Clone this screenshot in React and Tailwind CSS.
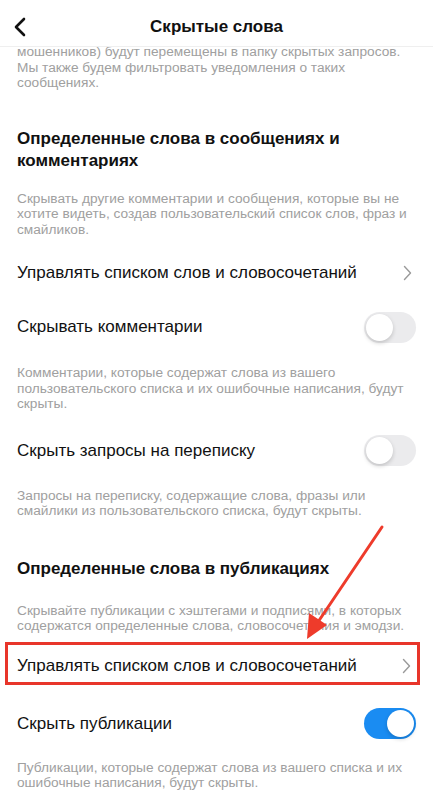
import React from 'react';

const Chevron = () => (
  <svg width="9" height="16" viewBox="0 0 9 16" fill="none" className="shrink-0">
    <polyline points="1.5,1.5 7.5,8 1.5,14.5" stroke="#9a9a9a" strokeWidth="1.4" strokeLinecap="round" strokeLinejoin="round" />
  </svg>
);

const Toggle = ({ on }) => (
  <div
    className={`relative h-[31px] w-[52px] shrink-0 rounded-full ${on ? 'bg-[#1a8cf2]' : 'bg-[#ebebed]'}`}
  >
    <div
      className={`absolute top-[2px] h-[27px] w-[27px] rounded-full bg-white shadow-[0_2px_4px_rgba(0,0,0,0.18)] ${on ? 'right-[2px]' : 'left-[2px]'}`}
    />
  </div>
);

const Note = ({ children, className = '' }) => (
  <p className={`whitespace-nowrap text-[13.7px] leading-[15.5px] text-[#a0a0a0] ${className}`}>{children}</p>
);

const App = () => {
  return (
    <div className="relative h-[800px] w-[433px] overflow-hidden bg-white font-['Liberation_Sans',Arial,sans-serif] text-[#111]">
      {/* Header */}
      <div className="relative z-10 flex h-[47px] items-center border-b border-[#efefef] bg-white px-[12px] pt-[7px]">
        <svg width="16" height="20" viewBox="0 0 16 20" fill="none">
          <polyline points="12,2 4,10 12,18" stroke="#111" strokeWidth="2.6" strokeLinecap="round" strokeLinejoin="round" />
        </svg>
        <h1 className="flex-1 pr-[16px] text-center text-[17px] font-semibold">Скрытые слова</h1>
      </div>

      <div className="px-[17px]">
        <Note className="-mt-[3px]">
          мошенников) будут перемещены в папку скрытых запросов.
          <br />
          Мы также будем фильтровать уведомления о таких
          <br />
          сообщениях.
        </Note>

        <h2 className="mt-[37px] text-[17px] font-bold leading-[22px]">
          Определенные слова в сообщениях и
          <br />
          комментариях
        </h2>

        <Note className="mt-[19px]">
          Скрывать другие комментарии и сообщения, которые вы не
          <br />
          хотите видеть, создав пользовательский список слов, фраз и
          <br />
          смайликов.
        </Note>

        <div className="mt-[14px] flex h-[44px] items-center justify-between pr-[4px]">
          <span className="text-[17px]">Управлять списком слов и словосочетаний</span>
          <Chevron />
        </div>

        <div className="mt-[10px] flex h-[44px] items-center justify-between">
          <span className="text-[17px]">Скрывать комментарии</span>
          <Toggle />
        </div>

        <Note className="mt-[16px]">
          Комментарии, которые содержат слова из вашего
          <br />
          пользовательского списка и их ошибочные написания, будут
          <br />
          скрыты.
        </Note>

        <div className="mt-[17px] flex h-[44px] items-center justify-between">
          <span className="text-[17px]">Скрыть запросы на переписку</span>
          <Toggle />
        </div>

        <Note className="mt-[15px]">
          Запросы на переписку, содержащие слова, фразы или
          <br />
          смайлики из пользовательского списка, будут скрыты.
        </Note>

        <h2 className="mt-[39px] text-[17px] font-bold leading-[22px]">Определенные слова в публикациях</h2>

        <Note className="mt-[23px]">
          Скрывайте публикации с хэштегами и подписями, в которых
          <br />
          содержатся определенные слова, словосочетания и эмодзи.
        </Note>

        <div className="-mx-[12px] mr-[-4px] mt-[8px] flex h-[43px] items-center justify-between border-[3px] border-[#e8352a] pl-[9px] pr-[6px] pt-[5px]">
          <span className="text-[17px]">Управлять списком слов и словосочетаний</span>
          <Chevron />
        </div>

        <div className="mt-[17px] flex h-[44px] items-center justify-between">
          <span className="text-[17px]">Скрыть публикации</span>
          <Toggle on />
        </div>

        <Note className="mt-[14px]">
          Публикации, которые содержат слова из вашего списка и их
          <br />
          ошибочные написания, будут скрыты.
        </Note>
      </div>

      {/* Annotation arrow */}
      <svg className="pointer-events-none absolute left-0 top-0" width="433" height="800" viewBox="0 0 433 800">
        <line x1="382" y1="527" x2="318" y2="622" stroke="#ee3b2b" strokeWidth="3" strokeLinecap="round" />
        <polygon points="307,639 309,613 327,625" fill="#ee3b2b" />
      </svg>
    </div>
  );
};

export default App;
